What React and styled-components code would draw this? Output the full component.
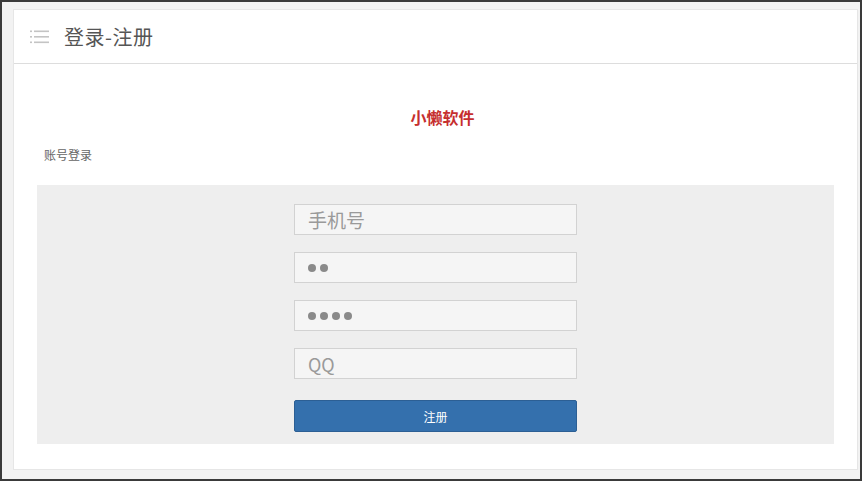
import React from "react";
import styled, { createGlobalStyle } from "styled-components";

const Global = createGlobalStyle`
  html, body { margin: 0; padding: 0; background: #ffffff; }
  body { font-family: "Noto Sans CJK SC", "Noto Sans", sans-serif; }
`;

const Frame = styled.div`
  box-sizing: border-box;
  width: 862px;
  height: 481px;
  border: 2px solid #3a3a3a;
  background: #f2f2f2;
  padding: 7px 2px 9px 11px;
  display: flex;
`;

const Panel = styled.div`
  flex: 1;
  background: #ffffff;
  border: 1px solid #e6e6e6;
  display: flex;
  flex-direction: column;
`;

const Header = styled.div`
  height: 53px;
  border-bottom: 1px solid #dddddd;
  display: flex;
  align-items: center;
  padding-left: 16px;
  gap: 15px;
`;

const Title = styled.div`
  font-size: 20px;
  color: #555555;
  letter-spacing: 0.5px;
`;

const Body = styled.div`
  padding: 41px 23px 0 23px;
  display: flex;
  flex-direction: column;
`;

const Brand = styled.div`
  text-align: center;
  padding-left: 14px;
  color: #c62f2f;
  font-weight: 700;
  font-size: 16px;
  line-height: 24px;
`;

const SubTitle = styled.div`
  margin-top: 16px;
  font-size: 12px;
  color: #666666;
  line-height: 20px;
  padding-left: 7px;
`;

const FormArea = styled.div`
  margin-top: 20px;
  background: #eeeeee;
  padding: 19px 0 12px;
  display: flex;
  flex-direction: column;
  align-items: center;
  gap: 17px;
`;

const Field = styled.div`
  box-sizing: border-box;
  width: 283px;
  height: 31px;
  border: 1px solid #d2d2d2;
  background: #f5f5f5;
  display: flex;
  align-items: center;
  padding-left: 13px;
  gap: 4px;
  color: #9a9a9a;
  font-size: ${(p) => p.$size || 19}px;
`;

const Dot = styled.span`
  width: 8px;
  height: 8px;
  border-radius: 50%;
  background: #8a8a8a;
`;

const Button = styled.div`
  box-sizing: border-box;
  width: 283px;
  height: 32px;
  margin-top: 4px;
  background: #3470ad;
  border: 1px solid #2c5f94;
  border-radius: 2px;
  color: #ffffff;
  font-size: 12px;
  display: flex;
  align-items: center;
  justify-content: center;
`;

const MenuIcon = () => (
  <svg width="19" height="14" viewBox="0 0 19 14">
    <g fill="#c4c4c4">
      <rect x="0" y="0.5" width="2" height="1.6" />
      <rect x="4" y="0.5" width="15" height="1.6" />
      <rect x="0" y="6" width="2" height="1.6" />
      <rect x="4" y="6" width="15" height="1.6" />
      <rect x="0" y="11.5" width="2" height="1.6" />
      <rect x="4" y="11.5" width="15" height="1.6" />
    </g>
  </svg>
);

export default function App() {
  return (
    <>
      <Global />
      <Frame>
        <Panel>
          <Header>
            <MenuIcon />
            <Title>登录-注册</Title>
          </Header>
          <Body>
            <Brand>小懒软件</Brand>
            <SubTitle>账号登录</SubTitle>
            <FormArea>
              <Field>手机号</Field>
              <Field>
                <Dot />
                <Dot />
              </Field>
              <Field>
                <Dot />
                <Dot />
                <Dot />
                <Dot />
              </Field>
              <Field $size={18}>QQ</Field>
              <Button>注册</Button>
            </FormArea>
          </Body>
        </Panel>
      </Frame>
    </>
  );
}
